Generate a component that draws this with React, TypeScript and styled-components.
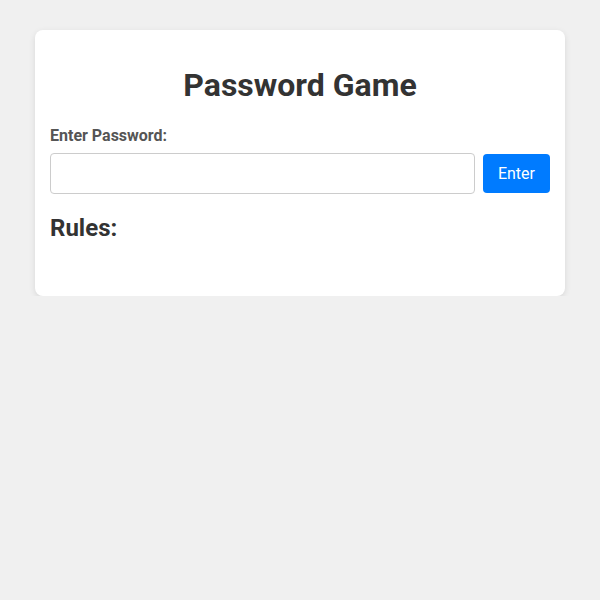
import styled, { createGlobalStyle } from 'styled-components';

const GlobalStyle = createGlobalStyle`
  body {
    margin: 0;
    background-color: #f0f0f0;
    font-family: Roboto, "Liberation Sans", Arial, sans-serif;
    color: #333;
  }
`;

const Card = styled.div`
  width: 500px;
  margin: 30px auto 0;
  padding: 15px 15px 34px;
  background-color: #fff;
  border-radius: 8px;
  box-shadow: 0 2px 6px rgba(0, 0, 0, 0.1);
`;

const Title = styled.h1`
  margin: 21px 0 22px;
  font-size: 32px;
  font-weight: 700;
  text-align: center;
  color: #333;
`;

const Label = styled.label`
  display: block;
  margin-bottom: 8px;
  font-size: 16px;
  font-weight: 700;
  color: #555;
`;

const InputRow = styled.div`
  display: flex;
  align-items: center;
  gap: 8px;
`;

const PasswordInput = styled.input`
  flex: 1;
  min-width: 0;
  padding: 10px;
  font-family: inherit;
  font-size: 16px;
  line-height: 19px;
  border: 1px solid #ccc;
  border-radius: 4px;
  outline: none;
`;

const EnterButton = styled.button`
  padding: 10px 15px;
  font-family: inherit;
  font-size: 16px;
  line-height: 19px;
  color: #fff;
  background-color: #007bff;
  border: none;
  border-radius: 4px;
  cursor: pointer;
`;

const RulesTitle = styled.h2`
  margin: 20px 0;
  font-size: 24px;
  font-weight: 700;
  color: #333;
`;

const RuleList = styled.ul`
  margin: 0;
  padding: 0;
  list-style: none;
`;

export default function App() {
  return (
    <>
      <GlobalStyle />
      <Card>
        <Title>Password Game</Title>
        <Label htmlFor="password">Enter Password:</Label>
        <InputRow>
          <PasswordInput id="password" type="text" />
          <EnterButton>Enter</EnterButton>
        </InputRow>
        <RulesTitle>Rules:</RulesTitle>
        <RuleList />
      </Card>
    </>
  );
}
